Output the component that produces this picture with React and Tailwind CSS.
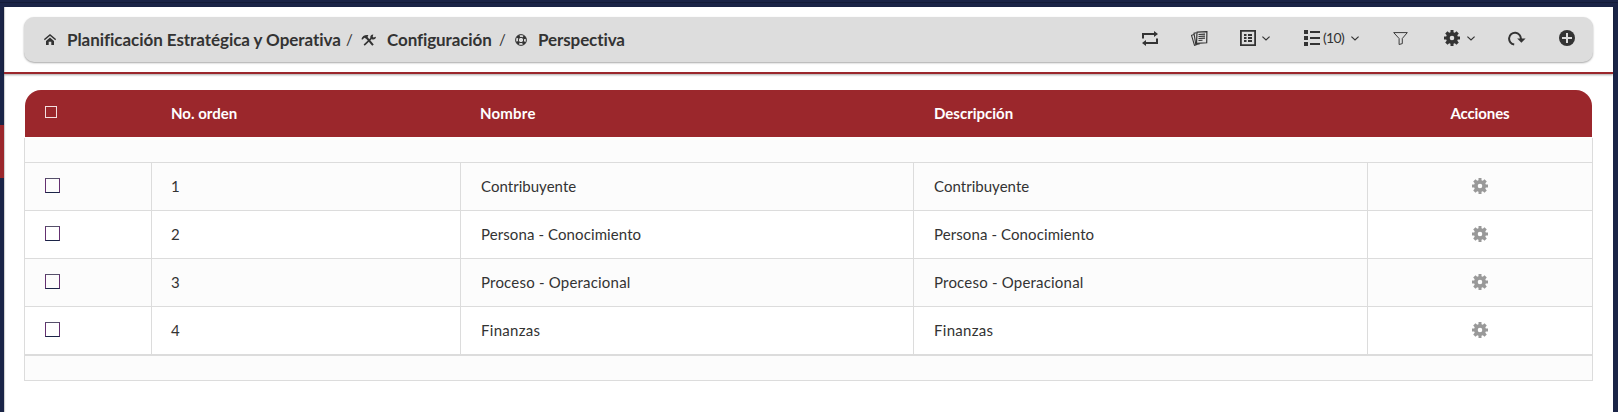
const rows = [
  { order: '1', name: 'Contribuyente', tracking: 'tracking-[0.03px]' },
  { order: '2', name: 'Persona - Conocimiento', tracking: 'tracking-[0.1px]' },
  { order: '3', name: 'Proceso - Operacional', tracking: 'tracking-[0.2px]' },
  { order: '4', name: 'Finanzas', tracking: 'tracking-[0.3px]' },
];

const columns = 'grid grid-cols-[127px_309px_453px_454px_225px]';

function Gear({ className }) {
  return (
    <svg viewBox="0 0 16 16" className={className} fill="currentColor">
      <path
        fillRule="evenodd"
        d="M6.500 0h3v2.200l1.300.5 1.700-1.500 2.300 2.300-1.500 1.700.5 1.300H16v3h-2.200l-.5 1.300 1.500 1.700-2.300 2.300-1.700-1.500-1.300.5V16h-3v-2.200l-1.300-.5-1.700 1.500-2.300-2.300 1.500-1.700-.5-1.300H0v-3h2.200l.5-1.300-1.500-1.700 2.300-2.300 1.700 1.500 1.300-.5zM8 5.700a2.300 2.300 0 1 0 0 4.600 2.300 2.300 0 0 0 0-4.600z"
      />
    </svg>
  );
}

function Chevron({ className }) {
  return (
    <svg viewBox="0 0 8 5" className={className} fill="none" stroke="currentColor" strokeWidth="1.2">
      <path d="M.4.6 4 4 7.600.6" />
    </svg>
  );
}

function HomeIcon() {
  return (
    <svg viewBox="0 0 12 11" className="h-[11px] w-3" fill="none" stroke="currentColor">
      <path d="M.3 5.700 6 1l5.700 4.700" strokeWidth="1.400" />
      <path d="M6 3.600 10 7v4H7.300V7.800H4.700V11H2V7z" fill="currentColor" stroke="none" />
    </svg>
  );
}

function ToolsIcon() {
  return (
    <svg viewBox="0 0 15 12" className="h-3 w-[15px]" fill="none" stroke="currentColor">
      <path d="M5.500 3.500 12 11.200" strokeWidth="2" />
      <path d="M.4 5.200C1 2.300 4 .6 7.400 1.200L5.400 4.700 3.200 3.800 1.800 5.600z" fill="currentColor" stroke="none" />
      <path d="M3.200 11.200 10.500 4.200" strokeWidth="1.600" />
      <path d="M12.300.4 11.700 2.800l.8.8 2.400-.8c.1 2-1.700 3.200-3.500 2.600L9.300 3.800C9 1.800 10.300.3 12.300.4z" fill="currentColor" stroke="none" />
    </svg>
  );
}

function LifebuoyIcon() {
  return (
    <svg viewBox="0 0 12 12" className="size-3" fill="none" stroke="currentColor">
      <circle cx="6" cy="6" r="5.400" strokeWidth="1" />
      <circle cx="6" cy="6" r="2.700" strokeWidth="1" />
      <circle cx="6" cy="6" r="4.100" strokeWidth="2.800" strokeDasharray="3 3.440" strokeDashoffset="-1.720" />
    </svg>
  );
}

function RepeatIcon() {
  return (
    <svg viewBox="0 0 16 15" className="h-[15px] w-4" fill="currentColor">
      <path d="M0 7.500V2h12V0l4 3-4 3V4H2v3.500zM16 7.500V13H4v2l-4-3 4-3v2h10V7.500z" />
    </svg>
  );
}

function PapersIcon() {
  return (
    <svg viewBox="0 0 17 15" className="h-[15px] w-[17px]" fill="none" stroke="currentColor">
      <path d="M6 1.200 15.900.6l-.2 11.200-10.200.6z" strokeWidth="1.200" />
      <path d="M7.500 3.500l6.500-.4M7.500 5.500l6.500-.4M7.500 7.500l6.500-.4M7.500 9.500l4-.3" strokeWidth="1.100" />
      <path d="M5.500 1.800 3 2.300l1.800 11.300 4-.8M3 3.500l-2.500.8 3 10 2-.6" strokeWidth="1.100" />
    </svg>
  );
}

function ListBoxIcon() {
  return (
    <svg viewBox="0 0 16 16" className="size-4" fill="none" stroke="currentColor">
      <path d="M.9.9h14.200v14.200H.9z" strokeWidth="1.800" />
      <path d="M4 5h2.500M4 8h2.500M4 11h2.500M8 5h4M8 8h4M8 11h4" strokeWidth="1.800" />
    </svg>
  );
}

function ListIcon() {
  return (
    <svg viewBox="0 0 16 16" className="size-4" fill="currentColor">
      <path d="M0 0h4v4H0zM0 6h4v4H0zM0 12h4v4H0zM6 1h10v2H6zM6 7h10v2H6zM6 13h10v2H6z" />
    </svg>
  );
}

function FunnelIcon() {
  return (
    <svg viewBox="0 0 15 13" className="h-[13px] w-[15px]" fill="none" stroke="currentColor">
      <path d="M.7.600h13.600L9.300 6.500v5.100l-3.200.9v-6z" strokeWidth=".95" strokeLinejoin="round" />
    </svg>
  );
}

function RedoIcon() {
  return (
    <svg viewBox="0 0 18 15" className="h-[15px] w-[18px]" fill="none" stroke="currentColor">
      <path d="M6.200 13.500A5.900 5.900 0 1 1 12.900 8" strokeWidth="2" />
      <path d="M9.200 7.500h8.400l-4.200 4.200z" fill="currentColor" stroke="none" />
    </svg>
  );
}

function PlusIcon() {
  return (
    <svg viewBox="0 0 16 16" className="size-4">
      <circle cx="8" cy="8" r="8" fill="#333" />
      <path d="M8 3v10M3 8h10" stroke="#ddd" strokeWidth="2" />
    </svg>
  );
}

function Breadcrumb() {
  return (
    <nav className="flex h-full items-center pl-5 text-[17px] font-bold">
      <HomeIcon />
      <span className="ml-[11px] w-[275px] tracking-[-0.05px] whitespace-nowrap">Planificación Estratégica y Operativa</span>
      <span className="ml-1 w-[15px] text-[15px] font-normal">/</span>
      <ToolsIcon />
      <span className="ml-[11px] w-[105px] tracking-[-0.1px] whitespace-nowrap">Configuración</span>
      <span className="ml-[7px] w-4 text-[15px] font-normal">/</span>
      <LifebuoyIcon />
      <span className="ml-[11px] tracking-[-0.1px] whitespace-nowrap">Perspectiva</span>
    </nav>
  );
}

function Toolbar() {
  return (
    <div className="flex h-[42px] items-center pr-[18px]">
      <RepeatIcon />
      <span className="ml-[33px]"><PapersIcon /></span>
      <span className="ml-8 flex items-center gap-[6px]">
        <ListBoxIcon />
        <Chevron className="h-[5px] w-2" />
      </span>
      <span className="ml-[34px] flex items-center">
        <ListIcon />
        <span className="ml-[3px] w-[28px] text-[14px] leading-none tracking-[-0.7px]">(10)</span>
        <Chevron className="h-[5px] w-2" />
      </span>
      <span className="ml-[34px]"><FunnelIcon /></span>
      <span className="ml-9 flex items-center gap-[7px]">
        <Gear className="size-4" />
        <Chevron className="h-[5px] w-2" />
      </span>
      <span className="ml-[33px]"><RedoIcon /></span>
      <span className="ml-[33px]"><PlusIcon /></span>
    </div>
  );
}

function TableHeader() {
  return (
    <div className={`${columns} h-[47px] items-center rounded-t-[16px] bg-[#9b272c] text-[15px] font-bold text-white`}>
      <div className="pl-5">
        <div className="mb-1 size-3 border border-[#f3dfe0]" />
      </div>
      <div className="pl-[19px]">No. orden</div>
      <div className="pl-[19px] tracking-[0.2px]">Nombre</div>
      <div className="pl-5">Descripción</div>
      <div className="pr-px text-center tracking-[-0.1px]">Acciones</div>
    </div>
  );
}

function Row({ row, striped }) {
  return (
    <div
      className={`${columns} h-12 divide-x divide-[#dcdcdc] border-b border-[#dcdcdc] text-[15px] ${striped ? 'bg-[#fcfcfc]' : 'bg-white'}`}
    >
      <div className="pt-[15px] pl-5">
        <div className="size-[15px] border border-[#1a2447] border-x-[#643070] border-t-[#55506a]" />
      </div>
      <div className="flex items-center pl-[19px]">{row.order}</div>
      <div className={`flex items-center pl-5 ${row.tracking}`}>{row.name}</div>
      <div className={`flex items-center pl-5 ${row.tracking}`}>{row.name}</div>
      <div className="flex justify-center pt-[15px] pr-px text-[#999]">
        <Gear className="size-4" />
      </div>
    </div>
  );
}

export default function App() {
  return (
    <div className="flex h-[412px] flex-col bg-[#1a2447] font-['Lato','Noto_Sans',sans-serif] text-[#333]">
      <div className="h-[7px] shrink-0 pt-[2px]">
        <div className="h-px bg-[#141c38]" />
      </div>
      <div className="flex flex-1">
        <div className="w-1 pt-[118px]">
          <div className="h-[53px] bg-[#9b272c]" />
        </div>
        <main className="w-[1609px] bg-white shadow-[inset_2px_0_1px_-1px_#ccc]">
          <header className="h-[67px] border-b-2 border-[#9b272c] pt-[10px] pr-5 pl-5 shadow-[0_1px_2px_rgba(0,0,0,0.35)]">
            <div className="flex h-[45px] justify-between rounded-[10px] bg-[#ddd] shadow-[0_1px_2px_rgba(0,0,0,0.35)]">
              <Breadcrumb />
              <Toolbar />
            </div>
          </header>
          <section className="ml-5 w-[1569px] pt-4">
            <div className="pr-px pl-px">
              <TableHeader />
            </div>
            <div className="mt-px border-r border-b border-l border-[#dcdcdc]">
              <div className="h-[25px] w-[1567px] border-b border-[#dcdcdc] bg-[#fcfcfc]" />
              <div className="w-[1567px] overflow-hidden border-b border-[#dcdcdc]">
                {rows.map((row, i) => (
                  <Row key={row.order} row={row} striped={i % 2 === 0} />
                ))}
              </div>
              <div className="h-6 bg-[#fcfcfc]" />
            </div>
          </section>
        </main>
      </div>
    </div>
  );
}
